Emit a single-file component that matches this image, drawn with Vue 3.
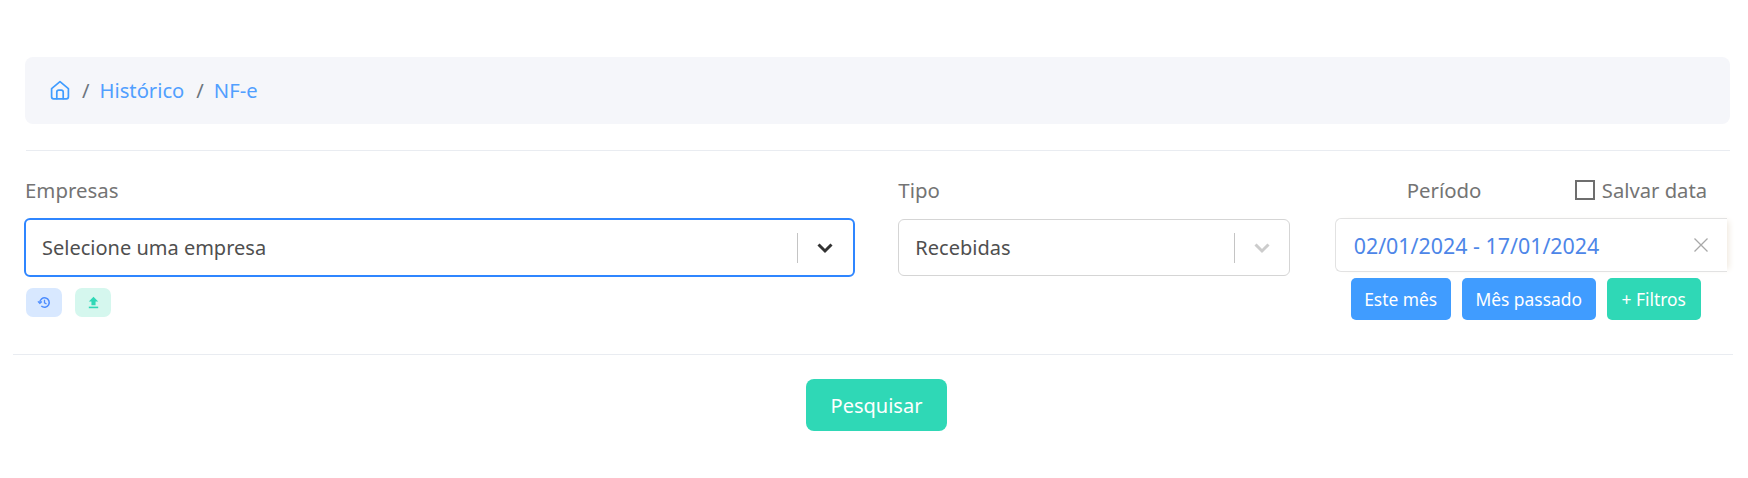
<template>
  <div class="page">
    <div class="top">
      <nav class="breadcrumb">
        <svg class="home" viewBox="0 0 20 20" width="20" height="20" fill="none" stroke="#409cff" stroke-width="1.7" stroke-linejoin="round" stroke-linecap="round">
          <path d="M1.6 8.6 10 1.6l8.4 7v8.2a2 2 0 0 1-2 2H3.6a2 2 0 0 1-2-2z" />
          <path d="M6.8 18.6v-6.4a2 2 0 0 1 2-2h2.4a2 2 0 0 1 2 2v6.4" />
        </svg>
        <span class="sep">/</span>
        <a class="crumb">Histórico</a>
        <span class="sep">/</span>
        <a class="crumb">NF-e</a>
      </nav>
      <hr class="line" />

      <div class="filters">
        <div class="col-empresas">
          <label class="label">Empresas</label>
          <div class="select focused">
            <span class="value">Selecione uma empresa</span>
            <span class="divider"></span>
            <svg class="chevron" viewBox="0 0 20 20" width="20" height="20"><path d="M3.5 6.5 10 13l6.5-6.5" fill="none" stroke="#333" stroke-width="3" /></svg>
          </div>
          <div class="mini-actions">
            <button class="mini blue">
              <svg viewBox="0 0 16 16" width="15" height="15" fill="none" stroke="#4d8dff" stroke-width="1.6">
                <path d="M3 8a5 5 0 1 1 1.6 3.7" />
                <path d="M1 6.8 3 9l2.2-2" stroke-width="1.4" />
                <path d="M8 5v3.3l2.2 1.3" stroke-width="1.4" />
              </svg>
            </button>
            <button class="mini green">
              <svg viewBox="0 0 16 16" width="15" height="15" fill="#2fd8b6">
                <path d="M8 1.8 13 7H10.2v4H5.8V7H3z" />
                <rect x="3" y="12.4" width="10" height="1.7" />
              </svg>
            </button>
          </div>
        </div>

        <div class="col-tipo">
          <label class="label">Tipo</label>
          <div class="select">
            <span class="value">Recebidas</span>
            <span class="divider"></span>
            <svg class="chevron" viewBox="0 0 20 20" width="20" height="20"><path d="M3.5 6.5 10 13l6.5-6.5" fill="none" stroke="#ccc" stroke-width="3" /></svg>
          </div>
        </div>

        <div class="col-periodo">
          <div class="periodo-head">
            <label class="label">Período</label>
            <label class="save">
              <span class="checkbox"></span>
              Salvar data
            </label>
          </div>
          <div class="date">
            <span class="date-value">02/01/2024 - 17/01/2024</span>
            <svg viewBox="0 0 16 16" width="16" height="16" stroke="#a8a8a8" stroke-width="1.3"><path d="M1.5 1.5l13 13M14.5 1.5l-13 13" /></svg>
          </div>
          <div class="quick">
            <button class="btn primary este">Este mês</button>
            <button class="btn primary passado">Mês passado</button>
            <button class="btn success filtros">+ Filtros</button>
          </div>
        </div>
      </div>
    </div>

    <hr class="line wide" />
    <div class="submit">
      <button class="search">Pesquisar</button>
    </div>
  </div>
</template>

<script setup>
</script>

<style>
html, body {
  background: #fff;
}
</style>

<style scoped>
.page {
  padding: 57px 15px 0 13px;
  font-family: "Noto Sans", "Open Sans", sans-serif;
  color: #6c6c6c;
}
.top {
  padding: 0 3px 0 13px;
}
.breadcrumb {
  display: flex;
  align-items: center;
  height: 67px;
  margin-left: -1px;
  padding: 0 25px 2px;
  box-sizing: border-box;
  background: #f5f6fa;
  border-radius: 8px;
  font-size: 20.2px;
}
.sep {
  margin: 0 10px 0 12px;
  color: #6c757d;
}
.crumb {
  color: #519fff;
}
.line {
  margin: 0;
  border: 0;
  border-top: 1px solid #e9ecf1;
  margin-top: 26px;
}
.filters {
  display: flex;
  margin-top: 25px;
}
.label {
  display: block;
  font-size: 20.4px;
  line-height: 28px;
  color: #747474;
}
.col-empresas {
  width: 837px;
  margin-left: -2px;
}
.col-empresas .label {
  margin-left: 1px;
}
.col-tipo {
  width: 394px;
  margin-left: 43px;
}
.col-periodo {
  width: 398px;
  margin-left: 45px;
}
.select {
  display: flex;
  align-items: center;
  height: 57px;
  margin-top: 15px;
  padding: 0 19px 0 16px;
  background: #fff;
  border: 1px solid #d5d5d5;
  border-radius: 6px;
  box-sizing: border-box;
}
.select.focused {
  height: 59px;
  margin-top: 14px;
  padding-right: 20px;
  border: 2px solid #2f86ff;
}
.value {
  flex: 1;
  font-size: 20px;
  color: #4f4f4f;
}
.divider {
  width: 1px;
  height: 30px;
  background: #c4c4c4;
  margin-right: 17px;
}
.select .chevron {
  margin-right: -2px;
}
.mini-actions {
  display: flex;
  gap: 13px;
  margin: 11px 0 0 2px;
}
.mini {
  display: flex;
  align-items: center;
  justify-content: center;
  width: 36px;
  height: 29px;
  padding: 0;
  border: 0;
  border-radius: 7px;
}
.mini.blue {
  background: #d8e8ff;
}
.mini.green {
  background: #d5f7ee;
}
.periodo-head {
  display: flex;
  justify-content: space-between;
  padding: 0 23px 0 72px;
}
.save {
  display: flex;
  align-items: center;
  gap: 7px;
  font-size: 20.2px;
  line-height: 28px;
  color: #747474;
}
.checkbox {
  width: 20px;
  height: 20px;
  border: 2px solid #6e6e6e;
  box-sizing: border-box;
}
.date {
  display: flex;
  align-items: center;
  justify-content: space-between;
  width: 392px;
  height: 54px;
  margin-top: 14px;
  padding: 0 18px 0 18px;
  border: 1px solid #e2e2e2;
  border-right: 0;
  border-radius: 6px 0 0 6px;
  box-sizing: border-box;
  box-shadow: 5px 0 6px -3px #f0e9df;
}
.date-value {
  font-size: 21.4px;
  color: #4d86e8;
}
.quick {
  display: flex;
  gap: 11px;
  margin: 6px 0 0 16px;
}
.btn {
  height: 42px;
  padding: 0;
  border: 0;
  border-radius: 5px;
  color: #fff;
  font-family: inherit;
  font-size: 17.4px;
}
.este {
  width: 100px;
}
.passado {
  width: 134px;
}
.filtros {
  width: 94px;
}
.primary {
  background: #409cff;
}
.success {
  background: #2fd8b6;
}
.wide {
  margin-top: 34px;
}
.submit {
  display: flex;
  justify-content: center;
  margin-top: 24px;
  padding-bottom: 46px;
  padding-left: 7px;
}
.search {
  width: 141px;
  height: 52px;
  border: 0;
  border-radius: 8px;
  background: #2fd8b6;
  color: #fff;
  font-family: inherit;
  font-size: 20px;
}
</style>
